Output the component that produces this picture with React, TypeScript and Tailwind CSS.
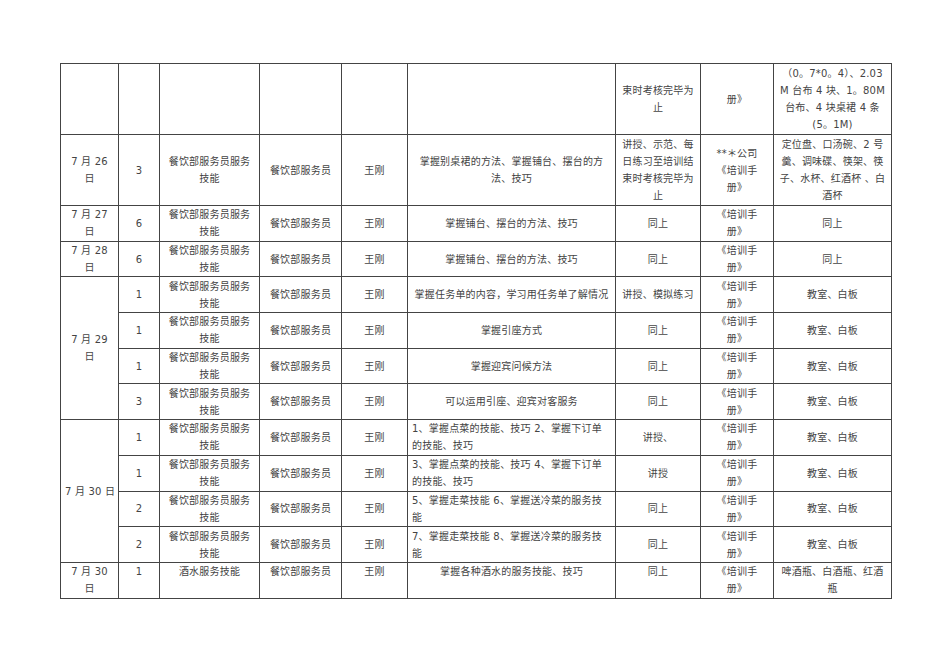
import React from "react";

const font = { fontFamily: '"DejaVu Sans", "Noto Sans CJK SC", sans-serif' };

const book = ["《培训手", "册》"];
const skill = ["餐饮部服务员服务", "技能"];

type Row = {
  n: string;
  content: string[];
  left?: boolean;
  method: string[];
  place: string[];
};

const day29: Row[] = [
  { n: "1", content: ["掌握任务单的内容，学习用任务单了解情况"], method: ["讲授、模拟练习"], place: ["教室、白板"] },
  { n: "1", content: ["掌握引座方式"], method: ["同上"], place: ["教室、白板"] },
  { n: "1", content: ["掌握迎宾问候方法"], method: ["同上"], place: ["教室、白板"] },
  { n: "3", content: ["可以运用引座、迎宾对客服务"], method: ["同上"], place: ["教室、白板"] },
];

const day30: Row[] = [
  { n: "1", content: ["1、掌握点菜的技能、技巧 2、掌握下订单", "的技能、技巧"], left: true, method: ["讲授、"], place: ["教室、白板"] },
  { n: "1", content: ["3、掌握点菜的技能、技巧 4、掌握下订单", "的技能、技巧"], left: true, method: ["讲授"], place: ["教室、白板"] },
  { n: "2", content: ["5、掌握走菜技能 6、掌握送冷菜的服务技", "能"], left: true, method: ["同上"], place: ["教室、白板"] },
  { n: "2", content: ["7、掌握走菜技能 8、掌握送冷菜的服务技", "能"], left: true, method: ["同上"], place: ["教室、白板"] },
];

function Lines({ lines }: { lines: string[] }) {
  return (
    <>
      {lines.map((l, i) => (
        <div key={i} className="whitespace-nowrap">
          {l}
        </div>
      ))}
    </>
  );
}

function Td({
  lines = [],
  rowSpan,
  left,
  top,
}: {
  lines?: string[];
  rowSpan?: number;
  left?: boolean;
  top?: boolean;
}) {
  return (
    <td
      rowSpan={rowSpan}
      className={`border border-[#444] px-1 py-0 overflow-hidden ${left ? "text-left" : "text-center"} ${
        top ? "align-top" : "align-middle"
      }`}
    >
      <Lines lines={lines} />
    </td>
  );
}

function GroupRows({ date, rows }: { date: string[]; rows: Row[] }) {
  return (
    <>
      {rows.map((r, i) => (
        <tr key={i} className="h-[35.7px]">
          {i === 0 && <Td lines={date} rowSpan={rows.length} />}
          <Td lines={[r.n]} />
          <Td lines={skill} />
          <Td lines={["餐饮部服务员"]} />
          <Td lines={["王刚"]} />
          <Td lines={r.content} left={r.left} />
          <Td lines={r.method} />
          <Td lines={book} />
          <Td lines={r.place} />
        </tr>
      ))}
    </>
  );
}

export default function App() {
  return (
    <div className="w-[950px] h-[672px] bg-white pt-[63px] pl-[60px]" style={font}>
      <table className="border-collapse table-fixed w-[831px] text-[10px] leading-[17px] tracking-[0.2px] text-[#444]">
        <colgroup>
          <col className="w-[58px]" />
          <col className="w-[41px]" />
          <col className="w-[100px]" />
          <col className="w-[82px]" />
          <col className="w-[66px]" />
          <col className="w-[208px]" />
          <col className="w-[85px]" />
          <col className="w-[73px]" />
          <col className="w-[118px]" />
        </colgroup>
        <tbody>
          <tr className="h-[71px]">
            <Td />
            <Td />
            <Td />
            <Td />
            <Td />
            <Td />
            <Td lines={["束时考核完毕为", "止"]} />
            <Td lines={["册》"]} />
            <Td lines={["（0。7*0。4）、2.03", "M 台布 4 块、1。80M", "台布、4 块桌裙 4 条", "(5。1M)"]} />
          </tr>
          <tr className="h-[71px]">
            <Td lines={["7 月 26", "日"]} />
            <Td lines={["3"]} />
            <Td lines={skill} />
            <Td lines={["餐饮部服务员"]} />
            <Td lines={["王刚"]} />
            <Td lines={["掌握别桌裙的方法、掌握铺台、摆台的方", "法、技巧"]} />
            <Td lines={["讲授、示范、每", "日练习至培训结", "束时考核完毕为", "止"]} />
            <Td lines={["**＊公司", "《培训手", "册》"]} />
            <Td lines={["定位盘、口汤碗、2 号", "羹、调味碟、筷架、筷", "子、水杯、红酒杯 、白", "酒杯"]} />
          </tr>
          {["27", "28"].map((d) => (
            <tr key={d} className="h-[35.7px]">
              <Td lines={[`7 月 ${d}`, "日"]} />
              <Td lines={["6"]} />
              <Td lines={skill} />
              <Td lines={["餐饮部服务员"]} />
              <Td lines={["王刚"]} />
              <Td lines={["掌握铺台、摆台的方法、技巧"]} />
              <Td lines={["同上"]} />
              <Td lines={book} />
              <Td lines={["同上"]} />
            </tr>
          ))}
          <GroupRows date={["7 月 29", "日"]} rows={day29} />
          <GroupRows date={["7 月 30 日"]} rows={day30} />
          <tr className="h-[35.7px]">
            <Td lines={["7 月 30", "日"]} top />
            <Td lines={["1"]} top />
            <Td lines={["酒水服务技能"]} top />
            <Td lines={["餐饮部服务员"]} top />
            <Td lines={["王刚"]} top />
            <Td lines={["掌握各种酒水的服务技能、技巧"]} top />
            <Td lines={["同上"]} top />
            <Td lines={book} top />
            <Td lines={["啤酒瓶、白酒瓶、红酒", "瓶"]} top />
          </tr>
        </tbody>
      </table>
    </div>
  );
}
